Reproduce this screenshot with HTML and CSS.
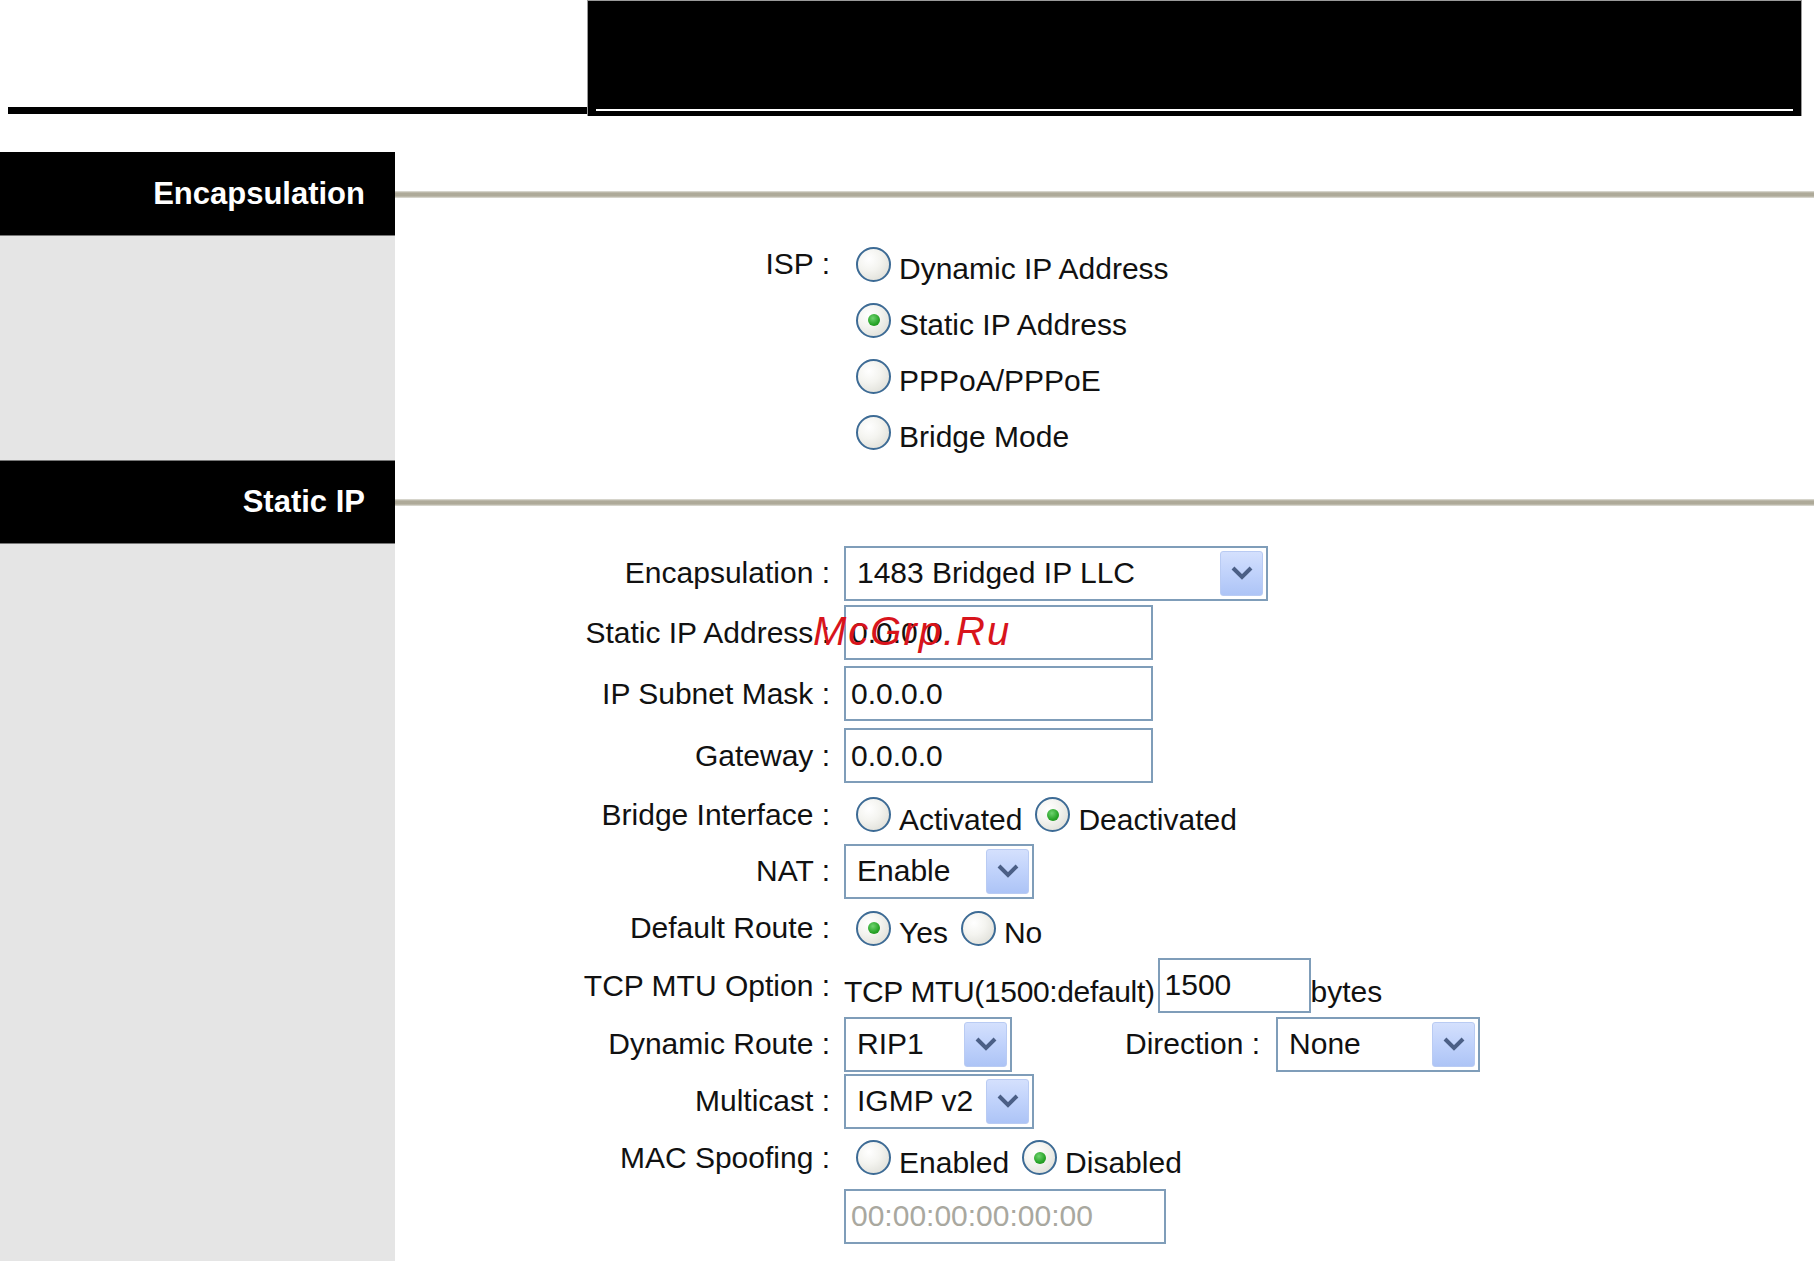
FILE: index.html
```html
<!DOCTYPE html>
<html>
<head>
<meta charset="utf-8">
<title>Encapsulation - Static IP</title>
<link rel="stylesheet" href="styles.css">
</head>
<body>
<div class="page">
  <header class="top">
    <div class="top-left"><div class="top-rule"></div></div>
    <div class="top-box"><div class="top-box-line"></div></div>
  </header>

  <div class="layout">
    <div class="side-head">Encapsulation</div>
    <div class="main-head"><div class="sep"></div></div>

    <div class="side-fill"></div>
    <div class="main-body">
      <div class="form isp-form">
        <div class="lbl">ISP :</div>
        <div class="ctl"><span class="radio"><span class="circle"></span><span class="rtext">Dynamic IP Address</span></span></div>
        <div class="ctl"><span class="radio"><span class="circle checked"></span><span class="rtext">Static IP Address</span></span></div>
        <div class="ctl"><span class="radio"><span class="circle"></span><span class="rtext">PPPoA/PPPoE</span></span></div>
        <div class="ctl"><span class="radio"><span class="circle"></span><span class="rtext">Bridge Mode</span></span></div>
      </div>
    </div>

    <div class="side-head side-head-2">Static IP</div>
    <div class="main-head"><div class="sep"></div></div>

    <div class="side-fill"></div>
    <div class="main-body">
      <div class="form ip-form">
        <div class="lbl">Encapsulation :</div>
        <div class="ctl">
          <div class="select sel-encap"><span class="sel-val">1483 Bridged IP LLC</span><span class="sel-btn"><svg viewBox="0 0 24 16" width="24" height="16"><path d="M3 3 L12 12 L21 3" fill="none" stroke="#4b5f86" stroke-width="4"/></svg></span></div>
        </div>

        <div class="lbl">Static IP Address :</div>
        <div class="ctl"><div class="field f-ip">0.0.0.0</div></div>

        <div class="lbl">IP Subnet Mask :</div>
        <div class="ctl"><div class="field f-ip">0.0.0.0</div></div>

        <div class="lbl">Gateway :</div>
        <div class="ctl"><div class="field f-ip">0.0.0.0</div></div>

        <div class="lbl">Bridge Interface :</div>
        <div class="ctl radios">
          <span class="radio"><span class="circle"></span><span class="rtext">Activated</span></span>
          <span class="radio"><span class="circle checked"></span><span class="rtext">Deactivated</span></span>
        </div>

        <div class="lbl">NAT :</div>
        <div class="ctl">
          <div class="select sel-nat"><span class="sel-val">Enable</span><span class="sel-btn"><svg viewBox="0 0 24 16" width="24" height="16"><path d="M3 3 L12 12 L21 3" fill="none" stroke="#4b5f86" stroke-width="4"/></svg></span></div>
        </div>

        <div class="lbl">Default Route :</div>
        <div class="ctl radios">
          <span class="radio"><span class="circle checked"></span><span class="rtext">Yes</span></span>
          <span class="radio"><span class="circle"></span><span class="rtext">No</span></span>
        </div>

        <div class="lbl">TCP MTU Option :</div>
        <div class="ctl mtu">
          <span class="mtu-text mtu-lead">TCP MTU(1500:default)</span><div class="field f-mtu">1500</div><span class="mtu-text">bytes</span>
        </div>

        <div class="lbl">Dynamic Route :</div>
        <div class="ctl dyn">
          <div class="select sel-rip"><span class="sel-val">RIP1</span><span class="sel-btn"><svg viewBox="0 0 24 16" width="24" height="16"><path d="M3 3 L12 12 L21 3" fill="none" stroke="#4b5f86" stroke-width="4"/></svg></span></div>
          <span class="dir-lbl">Direction :</span>
          <div class="select sel-dir"><span class="sel-val">None</span><span class="sel-btn"><svg viewBox="0 0 24 16" width="24" height="16"><path d="M3 3 L12 12 L21 3" fill="none" stroke="#4b5f86" stroke-width="4"/></svg></span></div>
        </div>

        <div class="lbl">Multicast :</div>
        <div class="ctl">
          <div class="select sel-nat"><span class="sel-val">IGMP v2</span><span class="sel-btn"><svg viewBox="0 0 24 16" width="24" height="16"><path d="M3 3 L12 12 L21 3" fill="none" stroke="#4b5f86" stroke-width="4"/></svg></span></div>
        </div>

        <div class="lbl">MAC Spoofing :</div>
        <div class="ctl radios">
          <span class="radio"><span class="circle"></span><span class="rtext">Enabled</span></span>
          <span class="radio"><span class="circle checked"></span><span class="rtext">Disabled</span></span>
        </div>

        <div class="ctl"><div class="field f-mac">00:00:00:00:00:00</div></div>
      </div>
    </div>
  </div>

  <div class="watermark">McGrp.Ru</div>
</div>
</body>
</html>
```

FILE: styles.css
```css
html, body {
  margin: 0;
  padding: 0;
  background: #fff;
}

body {
  font-family: "Liberation Sans", Arial, sans-serif;
  font-size: 30px;
  color: #111;
}

.page {
  position: relative;
  width: 1814px;
  height: 1261px;
  overflow: hidden;
}

/* ---------- top banner ---------- */
.top {
  display: flex;
  height: 152px;
}

.top-left {
  width: 579px;
  padding-left: 8px;
}

.top-rule {
  margin-top: 107px;
  height: 7px;
  background: #000;
}

.top-box {
  width: 1197px;
  height: 115px;
  background: #000;
  border: 1px solid #9a9a9a;
  border-bottom: none;
  padding-left: 8px;
  padding-right: 8px;
  box-sizing: content-box;
}

.top-box-line {
  margin-top: 108px;
  height: 2px;
  background: #fff;
}

/* ---------- main layout ---------- */
.layout {
  display: grid;
  grid-template-columns: 395px 1fr;
  grid-template-rows: 84px 224px 84px 1fr;
  height: 1109px;
}

.side-head {
  background: #000;
  color: #fff;
  font-weight: bold;
  font-size: 31px;
  display: flex;
  align-items: center;
  justify-content: flex-end;
  padding-right: 30px;
  border-bottom: 1px solid #777;
  box-sizing: border-box;
}

.side-head-2 {
  border-top: 1px solid #777;
}

.side-fill {
  background: #e5e5e5;
}

.main-head {
  display: flex;
  align-items: center;
}

.sep {
  width: 100%;
  height: 7px;
  background: linear-gradient(to bottom, #e2e2dc 0, #c9c6ba 1px, #aeaa99 2px, #aeaa99 5px, #c9c6ba 6px, #e2e2dc 7px);
}

/* ---------- forms ---------- */
.form {
  display: grid;
  grid-template-columns: 435px 1fr;
  column-gap: 14px;
  align-items: center;
}

.isp-form {
  grid-template-rows: repeat(4, 56px);
}

.ip-form {
  grid-template-rows: 58px 61px 61px 63px 55px 58px 56px 59px 58px 56px 57px 60px;
}

.lbl {
  grid-column: 1;
  text-align: right;
  white-space: nowrap;
}

.ctl {
  grid-column: 2;
  display: flex;
  align-items: center;
}

.radios {
  gap: 13px;
}

/* radio */
.radio {
  display: inline-flex;
  align-items: center;
  gap: 8px;
  margin-left: 12px;
}

.radios .radio + .radio {
  margin-left: 0;
}

.circle {
  width: 31px;
  height: 31px;
  border-radius: 50%;
  border: 2px solid #3d6b95;
  background: radial-gradient(circle at 35% 32%, #ffffff 0%, #f4f4f0 40%, #d8d8d0 100%);
  display: inline-flex;
  align-items: center;
  justify-content: center;
  flex: none;
}

.circle.checked::after {
  content: "";
  width: 12px;
  height: 12px;
  border-radius: 50%;
  background: radial-gradient(circle at 40% 35%, #6fd36f 0%, #27a327 60%, #1c861c 100%);
}

.rtext {
  padding-top: 10px;
}

/* select */
.select {
  display: flex;
  align-items: center;
  justify-content: space-between;
  height: 55px;
  box-sizing: border-box;
  border: 2px solid #7f9db9;
  background: #fff;
  padding: 0 3px 0 11px;
  white-space: nowrap;
}

.sel-encap { width: 424px; }
.sel-nat { width: 190px; }
.sel-rip { width: 168px; }
.sel-dir { width: 204px; }

.sel-btn {
  width: 43px;
  height: 45px;
  box-sizing: border-box;
  border: 1px solid #b9cbf3;
  border-radius: 3px;
  background: linear-gradient(to bottom, #d4e0fd 0%, #c0d2fb 50%, #adc4f6 100%);
  display: flex;
  align-items: center;
  justify-content: center;
  flex: none;
}

/* text fields */
.field {
  height: 55px;
  box-sizing: border-box;
  border: 2px solid #7f9db9;
  background: #fff;
  padding-left: 5px;
  display: flex;
  align-items: center;
  white-space: nowrap;
}

.f-ip { width: 309px; }
.f-mac { width: 322px; color: #a9a89f; }

.f-mtu {
  width: 153px;
  margin-left: 3px;
  align-items: flex-start;
  padding-top: 8px;
}

.mtu {
  align-items: center;
}

.mtu-text {
  padding-top: 12px;
}

.mtu-lead {
  letter-spacing: -0.35px;
}

.dir-lbl {
  margin-left: 113px;
  margin-right: 16px;
  white-space: nowrap;
}

/* watermark overlay */
.watermark {
  position: absolute;
  left: 813px;
  top: 611px;
  font-size: 40px;
  line-height: 40px;
  font-style: italic;
  letter-spacing: 2px;
  color: #d8141c;
}
```
